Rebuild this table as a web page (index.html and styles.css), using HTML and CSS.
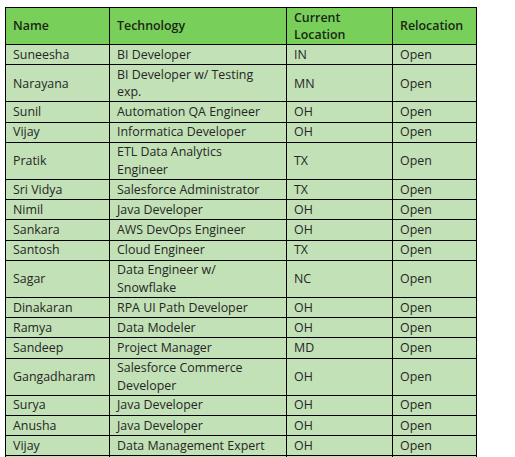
FILE: index.html
```html
<!DOCTYPE html>
<html>
<head>
<meta charset="utf-8">
<link rel="stylesheet" href="styles.css">
</head>
<body>
<table class="roster">
  <colgroup>
    <col class="c-name"><col class="c-tech"><col class="c-loc"><col class="c-rel">
  </colgroup>
  <thead>
    <tr class="dbl"><th>Name</th><th>Technology</th><th>Current<br>Location</th><th>Relocation</th></tr>
  </thead>
  <tbody>
    <tr><td>Suneesha</td><td>BI Developer</td><td>IN</td><td>Open</td></tr>
    <tr class="dbl"><td>Narayana</td><td>BI Developer w/ Testing<br>exp.</td><td>MN</td><td>Open</td></tr>
    <tr><td>Sunil</td><td>Automation QA Engineer</td><td>OH</td><td>Open</td></tr>
    <tr><td>Vijay</td><td>Informatica Developer</td><td>OH</td><td>Open</td></tr>
    <tr class="dbl"><td>Pratik</td><td>ETL Data Analytics<br>Engineer</td><td>TX</td><td>Open</td></tr>
    <tr><td>Sri Vidya</td><td>Salesforce Administrator</td><td>TX</td><td>Open</td></tr>
    <tr><td>Nimil</td><td>Java Developer</td><td>OH</td><td>Open</td></tr>
    <tr><td>Sankara</td><td>AWS DevOps Engineer</td><td>OH</td><td>Open</td></tr>
    <tr><td>Santosh</td><td>Cloud Engineer</td><td>TX</td><td>Open</td></tr>
    <tr class="dbl"><td>Sagar</td><td>Data Engineer w/<br>Snowflake</td><td>NC</td><td>Open</td></tr>
    <tr><td>Dinakaran</td><td>RPA UI Path Developer</td><td>OH</td><td>Open</td></tr>
    <tr><td>Ramya</td><td>Data Modeler</td><td>OH</td><td>Open</td></tr>
    <tr><td>Sandeep</td><td>Project Manager</td><td>MD</td><td>Open</td></tr>
    <tr class="dbl"><td>Gangadharam</td><td>Salesforce Commerce<br>Developer</td><td>OH</td><td>Open</td></tr>
    <tr><td>Surya</td><td>Java Developer</td><td>OH</td><td>Open</td></tr>
    <tr><td>Anusha</td><td>Java Developer</td><td>OH</td><td>Open</td></tr>
    <tr><td>Vijay</td><td>Data Management Expert</td><td>OH</td><td>Open</td></tr>
    <tr><td>&nbsp;</td><td>&nbsp;</td><td>&nbsp;</td><td>&nbsp;</td></tr>
  </tbody>
</table>
</body>
</html>
```
FILE: styles.css
```css
html, body {
  margin: 0;
  background: #ffffff;
}
body {
  padding: 7px 0 0 5px;
  font-family: "Open Sans", Lato, sans-serif;
  font-size: 12.4px;
  color: #262626;
}
.roster {
  border-collapse: collapse;
  table-layout: fixed;
  width: 471px;
}
.c-name { width: 104px; }
.c-tech { width: 177px; }
.c-loc { width: 106px; }
.c-rel { width: 84px; }
.roster th,
.roster td {
  border: 1px solid #000;
  padding: 0 7px;
  height: 19.25px;
  line-height: 17.5px;
  text-align: left;
  vertical-align: middle;
  white-space: nowrap;
  overflow: hidden;
}
.roster th {
  background: #78d05a;
  font-weight: 600;
  color: #1a2616;
}
.roster td {
  background: #c2e1b6;
}
.roster tr.dbl th,
.roster tr.dbl td {
  height: 36px;
}
```
